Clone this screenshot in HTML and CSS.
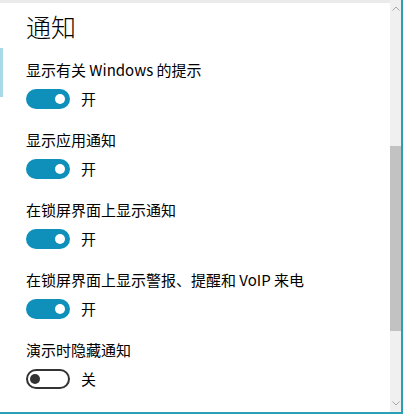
FILE: index.html
```html
<!DOCTYPE html>
<html lang="zh-CN">
<head>
<meta charset="utf-8">
<title>通知</title>
<link rel="stylesheet" href="styles.css">
</head>
<body>
<div class="window">
  <main class="content">
    <span class="focus-strip"></span>
    <h1 class="title">通知</h1>
    <section class="setting">
      <div class="label">显示有关 Windows 的提示</div>
      <div class="switch-row"><span class="toggle on"><span class="knob"></span></span><span class="state">开</span></div>
    </section>
    <section class="setting">
      <div class="label">显示应用通知</div>
      <div class="switch-row"><span class="toggle on"><span class="knob"></span></span><span class="state">开</span></div>
    </section>
    <section class="setting">
      <div class="label">在锁屏界面上显示通知</div>
      <div class="switch-row"><span class="toggle on"><span class="knob"></span></span><span class="state">开</span></div>
    </section>
    <section class="setting">
      <div class="label">在锁屏界面上显示警报、提醒和 VoIP 来电</div>
      <div class="switch-row"><span class="toggle on"><span class="knob"></span></span><span class="state">开</span></div>
    </section>
    <section class="setting">
      <div class="label">演示时隐藏通知</div>
      <div class="switch-row"><span class="toggle off"><span class="knob"></span></span><span class="state">关</span></div>
    </section>
  </main>
  <aside class="scrollbar">
    <div class="arrow">
      <svg width="8" height="5" viewBox="0 0 8 5"><path d="M0.5 4.5 L4 1 L7.5 4.5" fill="none" stroke="#a6a6a6" stroke-width="1"/></svg>
    </div>
    <div class="track">
      <div class="gap-top"></div>
      <div class="thumb"></div>
      <div class="gap-bottom"></div>
    </div>
    <div class="arrow">
      <svg width="8" height="5" viewBox="0 0 8 5"><path d="M0.5 0.5 L4 4 L7.5 0.5" fill="none" stroke="#a6a6a6" stroke-width="1"/></svg>
    </div>
  </aside>
</div>
</body>
</html>
```
FILE: styles.css
```css
html, body {
  margin: 0;
  padding: 0;
  background: #ffffff;
}

body {
  font-family: "Noto Sans CJK SC", "Noto Sans", "Liberation Sans", sans-serif;
  color: #000000;
}

.window {
  width: 403px;
  height: 414px;
  box-sizing: border-box;
  display: flex;
  border-right: 2px solid #2b9fb6;
  border-bottom: 2px solid #2b9fb6;
  overflow: hidden;
}

.content {
  position: relative;
  flex: 1;
  border-top: 3px solid #ebebeb;
  padding: 7px 0 0 26px;
}

.focus-strip {
  position: absolute;
  left: 0;
  top: 45px;
  width: 3px;
  height: 49px;
  background: #a9d9e7;
}

.title {
  margin: 0 0 18px;
  font-size: 25px;
  line-height: 32px;
  font-weight: 300;
}

.setting {
  height: 70px;
}

.label {
  font-size: 15px;
  line-height: 20px;
  margin-bottom: 9px;
}

.switch-row {
  display: flex;
  align-items: center;
  gap: 11px;
  height: 20px;
}

.toggle {
  box-sizing: border-box;
  width: 44px;
  height: 20px;
  border-radius: 10px;
  display: flex;
  align-items: center;
  padding: 0 3px;
}

.toggle.on {
  background: #0f90ba;
  justify-content: flex-end;
  padding-right: 5px;
}

.toggle.off {
  border: 2px solid #333333;
  background: #ffffff;
  justify-content: flex-start;
  padding-left: 2px;
}

.knob {
  width: 10px;
  height: 10px;
  border-radius: 50%;
}

.toggle.on .knob {
  background: #ffffff;
}

.toggle.off .knob {
  background: #333333;
}

.state {
  font-size: 15px;
  line-height: 20px;
}

.scrollbar {
  width: 11px;
  background: #f0f0f0;
  display: flex;
  flex-direction: column;
}

.arrow {
  height: 17px;
  display: flex;
  align-items: center;
  justify-content: center;
}

.track {
  flex: 1;
  display: flex;
  flex-direction: column;
}

.gap-top {
  height: 129px;
}

.thumb {
  height: 185px;
  background: #c2c2c2;
}

.gap-bottom {
  flex: 1;
}
```
